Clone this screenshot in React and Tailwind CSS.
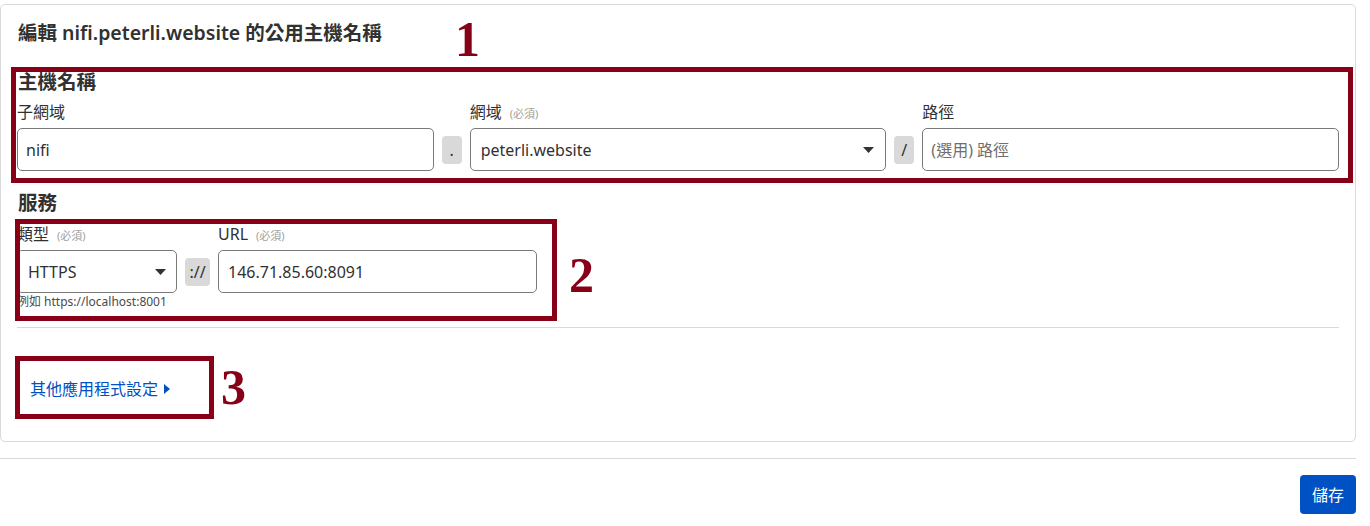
import React from "react";

function Caret() {
  return (
    <svg width="11" height="6" viewBox="0 0 11 6" className="shrink-0">
      <path d="M0 0 H11 L5.5 6 Z" fill="#333333" />
    </svg>
  );
}

function Label({ text, required }) {
  return (
    <div className="h-[24px] leading-[24px] text-[16px] flex items-baseline">
      <span>{text}</span>
      {required && <span className="ml-[8px] text-[11px] text-[#a0a0a0]">(必須)</span>}
    </div>
  );
}

function Sep({ children, w }) {
  return (
    <div className={`self-center flex items-center justify-center h-[28px] rounded-[4px] bg-[#d9d9d9] text-[16px] text-[#313131] ${w}`}>
      {children}
    </div>
  );
}

export default function App() {
  return (
    <div className="w-[1370px] h-[526px] bg-white text-[#313131] font-['Noto_Sans','Noto_Sans_CJK_TC',sans-serif]">
      <div className="pt-[4px]">
        <div className="relative w-[1356px] h-[438px] border border-[#d9d9d9] rounded-[5px] px-[16px] pt-[13px]">
          <h2 className="h-[30px] leading-[30px] text-[19.5px] font-semibold pl-[1px]">編輯 nifi.peterli.website 的公用主機名稱</h2>

          <h3 className="mt-[22px] h-[24px] leading-[24px] text-[19.5px] font-semibold pl-[1px]">主機名稱</h3>
          <div className="mt-[6px] grid grid-cols-[1fr_20px_1fr_20px_1fr] gap-x-[8px] gap-y-[4px]">
            <Label text="子網域" />
            <div />
            <Label text="網域" required />
            <div />
            <Label text="路徑" />

            <div className="h-[43px] border border-[#7a7a7a] rounded-[5px] pl-[8px] flex items-center text-[16px]">nifi</div>
            <Sep w="w-[20px]">.</Sep>
            <div className="h-[43px] border border-[#7a7a7a] rounded-[5px] pl-[10px] pr-[11px] flex items-center justify-between text-[16px]">
              <span>peterli.website</span>
              <Caret />
            </div>
            <Sep w="w-[20px]">/</Sep>
            <div className="h-[43px] border border-[#7a7a7a] rounded-[5px] pl-[8px] flex items-center text-[16px] text-[#6f6f6f]">(選用) 路徑</div>
          </div>

          <h3 className="mt-[20px] h-[24px] leading-[24px] text-[19.5px] font-semibold pl-[1px]">服務</h3>
          <div className="mt-[7px] grid grid-cols-[160px_25px_319px] gap-x-[8px]">
            <Label text="類型" required />
            <div />
            <Label text="URL" required />

            <div className="mt-[4px] h-[43px] border border-[#7a7a7a] rounded-[5px] pl-[10px] pr-[10px] flex items-center justify-between text-[16px]">
              <span>HTTPS</span>
              <Caret />
            </div>
            <div className="mt-[4px] self-center flex items-center justify-center h-[28px] rounded-[4px] bg-[#d9d9d9] text-[16px] w-[25px]">://</div>
            <div className="mt-[4px] h-[43px] border border-[#7a7a7a] rounded-[5px] pl-[9px] flex items-center text-[16px]">146.71.85.60:8091</div>

            <div className="mt-[1px] h-[15px] leading-[15px] text-[12px] text-[#4a4a4a] whitespace-nowrap">例如 https://localhost:8001</div>
          </div>

          <div className="mt-[18px] border-t border-[#d9d9d9]" />

          <div className="mt-[51px] h-[20px] flex items-center gap-[6px] pl-[13px] text-[16px] text-[#0051c3]">
            <span>其他應用程式設定</span>
            <svg width="6" height="10" viewBox="0 0 6 10"><path d="M0 0 L6 5 L0 10 Z" fill="#0051c3" /></svg>
          </div>

          {/* annotation overlays */}
          <div className="absolute left-[10px] top-[62px] w-[1342px] h-[116px] border-[5px] border-[#870017]" />
          <div className="absolute left-[14px] top-[214px] w-[542px] h-[102px] border-[5px] border-[#870017]" />
          <div className="absolute left-[14px] top-[351px] w-[199px] h-[63px] border-[5px] border-[#870017]" />
          <div className="absolute left-[454px] top-[9px] text-[50px] leading-[50px] font-bold text-[#870017] font-['Liberation_Serif',serif]">1</div>
          <div className="absolute left-[568px] top-[245px] text-[50px] leading-[50px] font-bold text-[#870017] font-['Liberation_Serif',serif]">2</div>
          <div className="absolute left-[220px] top-[357px] text-[50px] leading-[50px] font-bold text-[#870017] font-['Liberation_Serif',serif]">3</div>
        </div>
      </div>

      <div className="mt-[16px] w-[1356px] border-t border-[#d9d9d9]" />
      <div className="mt-[16px] w-[1356px] flex justify-end">
        <button className="w-[56px] h-[39px] rounded-[4px] bg-[#0051c3] text-white text-[16px]">儲存</button>
      </div>
    </div>
  );
}
